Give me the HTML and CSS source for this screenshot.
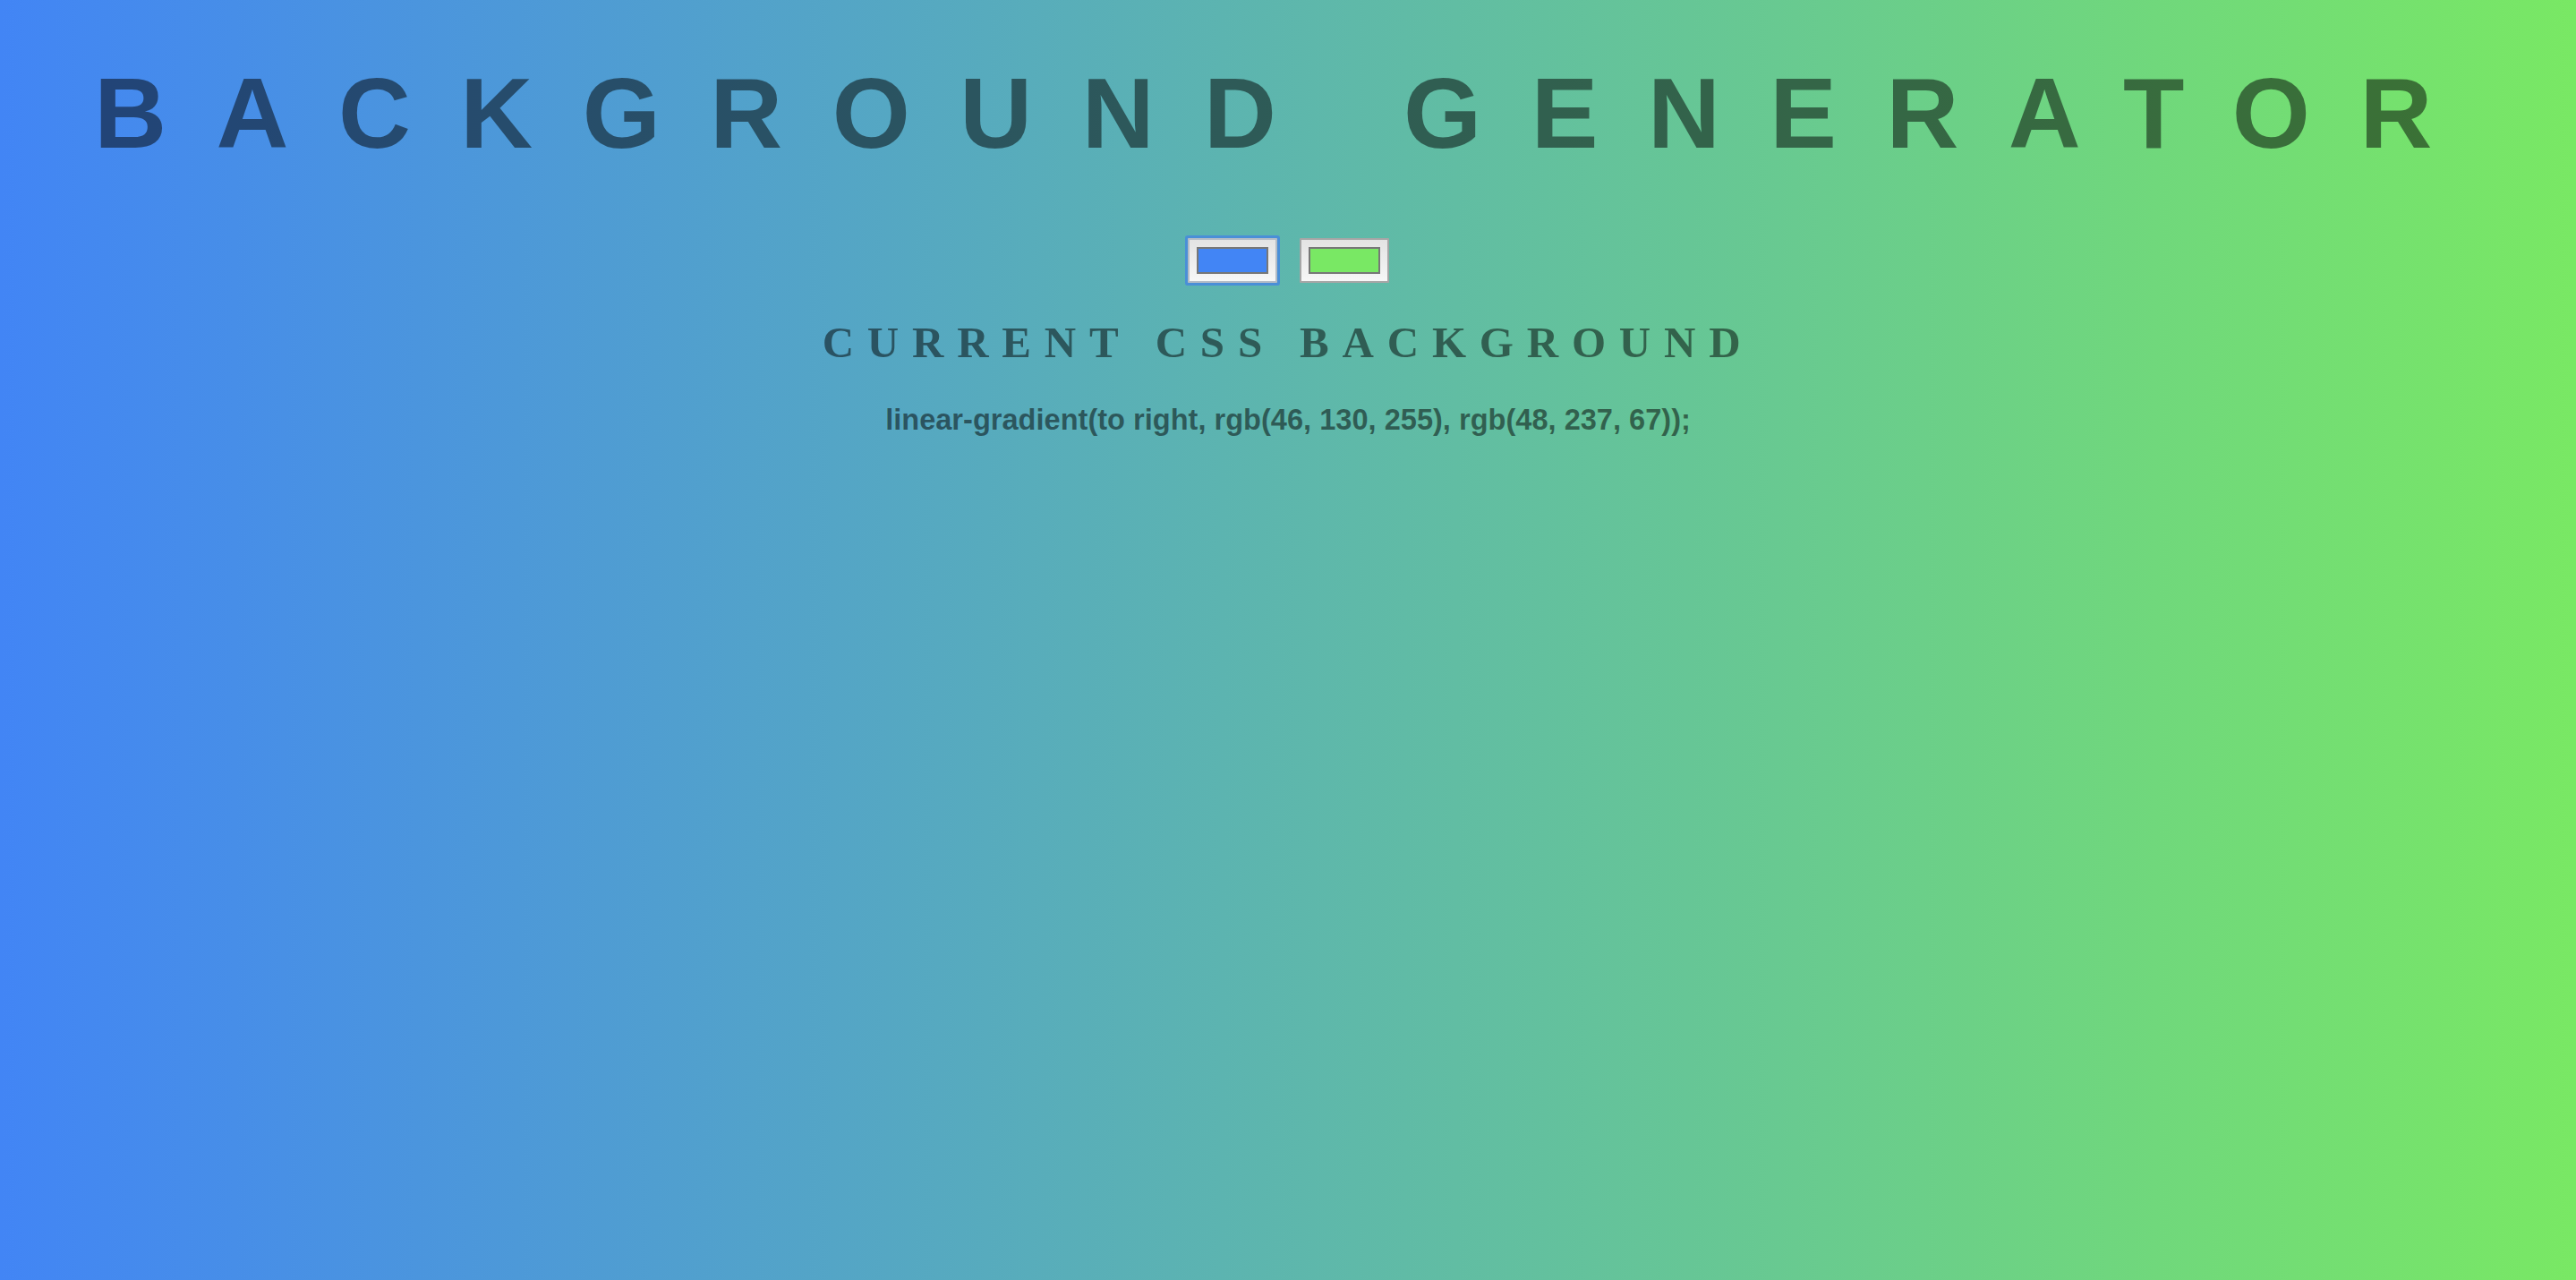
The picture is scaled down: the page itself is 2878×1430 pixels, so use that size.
FILE: index.html
```html
<!DOCTYPE html>
<html lang="en">
<head>
<meta charset="utf-8">
<title>Background Generator</title>
<link rel="stylesheet" href="styles.css">
</head>
<body>
  <h1 class="title">Background Generator</h1>
  <div class="pickers">
    <input class="picker picker--active" type="color" name="color1" value="#4285f5">
    <input class="picker" type="color" name="color2" value="#79e864">
  </div>
  <h3 class="subtitle">Current CSS Background</h3>
  <p class="code">linear-gradient(to right, rgb(46, 130, 255), rgb(48, 237, 67));</p>
</body>
</html>
```

FILE: styles.css
```css
html {
  height: 100%;
}

body {
  margin: 0;
  min-height: 100%;
  background: linear-gradient(to right, #4285f5, #79e864);
  color: rgba(0, 0, 0, 0.5);
  text-align: center;
  font-family: "Liberation Sans", Arial, sans-serif;
}

.title {
  margin: 0;
  padding-top: 63px;
  font-family: "Liberation Sans", Arial, sans-serif;
  font-weight: 700;
  font-size: 112px;
  line-height: 128px;
  letter-spacing: 55.5px;
  text-transform: uppercase;
}

.pickers {
  display: flex;
  justify-content: center;
  gap: 25px;
  margin-top: 75px;
}

.picker {
  -webkit-appearance: none;
  appearance: none;
  box-sizing: border-box;
  width: 100px;
  height: 50px;
  margin: 0;
  padding: 8px;
  border: 2px solid #a6a6a6;
  border-radius: 1px;
  background: linear-gradient(#e3e3e3, #f7f7f7);
  cursor: pointer;
}

.picker::-webkit-color-swatch-wrapper {
  padding: 0;
}

.picker::-webkit-color-swatch {
  border: 2px solid #777777;
  border-radius: 0;
}

.picker--active {
  border-color: #b4bcc6;
  box-shadow: 0 0 0 3px #4a8fd7;
}

.subtitle {
  margin: 39px 0 0;
  font-family: "Liberation Serif", "Times New Roman", serif;
  font-weight: 700;
  font-size: 49px;
  line-height: 56px;
  letter-spacing: 14.8px;
  text-transform: uppercase;
}

.code {
  margin: 39px 0 0;
  font-family: "Liberation Sans", Arial, sans-serif;
  font-weight: 700;
  font-size: 32.6px;
  line-height: 38px;
}
```
